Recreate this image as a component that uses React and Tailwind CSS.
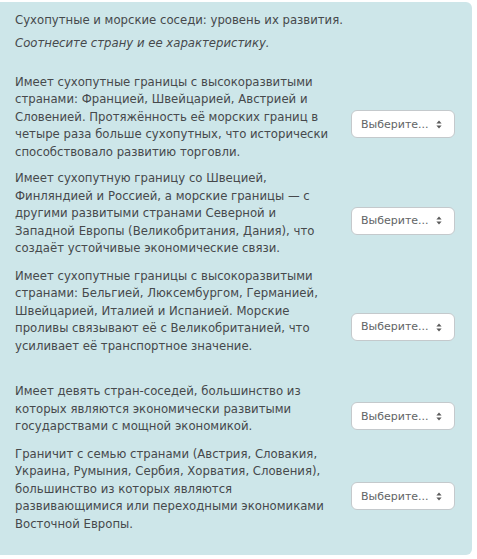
const rows = [
  {
    gap: '',
    lines: [
      'Имеет сухопутные границы с высокоразвитыми',
      'странами: Францией, Швейцарией, Австрией и',
      'Словенией. Протяжённость её морских границ в',
      'четыре раза больше сухопутных, что исторически',
      'способствовало развитию торговли.',
    ],
  },
  {
    gap: 'mt-[0.5px]',
    lines: [
      'Имеет сухопутную границу со Швецией,',
      'Финляндией и Россией, а морские границы — с',
      'другими развитыми странами Северной и',
      'Западной Европы (Великобритания, Дания), что',
      'создаёт устойчивые экономические связи.',
    ],
  },
  {
    gap: 'mt-[1.5px]',
    lines: [
      'Имеет сухопутные границы с высокоразвитыми',
      'странами: Бельгией, Люксембургом, Германией,',
      'Швейцарией, Италией и Испанией. Морские',
      'проливы связывают её с Великобританией, что',
      'усиливает её транспортное значение.',
      '\u00a0',
    ],
  },
  {
    gap: 'mt-[2px]',
    lines: [
      'Имеет девять стран-соседей, большинство из',
      'которых являются экономически развитыми',
      'государствами с мощной экономикой.',
    ],
  },
  {
    gap: 'mt-[1.5px]',
    lines: [
      'Граничит с семью странами (Австрия, Словакия,',
      'Украина, Румыния, Сербия, Хорватия, Словения),',
      'большинство из которых являются',
      'развивающимися или переходными экономиками',
      'Восточной Европы.',
    ],
  },
]

function Caret() {
  return (
    <svg width="6" height="9" viewBox="0 0 6 9" className="shrink-0">
      <path d="M3 0.5 L5.6 3.6 H0.4 Z" fill="#5a5a5a" />
      <path d="M3 8.5 L5.6 5.4 H0.4 Z" fill="#5a5a5a" />
    </svg>
  )
}

function Select() {
  return (
    <div className="mt-[7px] flex h-[28px] w-[104px] shrink-0 items-center justify-between rounded-[6px] border border-[#c4c9cc] bg-white pl-[9px] pr-[12px] text-[11px] text-[#626466]">
      <span>Выберите...</span>
      <Caret />
    </div>
  )
}

export default function App() {
  return (
    <div className="min-h-screen bg-white pt-[2px] font-['DejaVu_Sans',sans-serif] text-[#46494c]">
      <div className="w-[472px] rounded-r-[6px] bg-[#cde6e9] pb-[15px] pl-[15px] pr-[17px] pt-[10px] text-[11.7px] leading-[17.5px]">
        <p className="mb-[5.5px]">Сухопутные и морские соседи: уровень их развития.</p>
        <p className="mb-[21px] italic">Соотнесите страну и ее характеристику.</p>
        <div className="flex flex-col gap-[1.5px]">
          {rows.map((row, i) => (
            <div key={i} className={`flex items-center justify-between ${row.gap}`}>
              <p className="mb-[7px] w-[330px]">
                {row.lines.map((l, j) => (
                  <span key={j} className="block whitespace-nowrap">{l}</span>
                ))}
              </p>
              <Select />
            </div>
          ))}
        </div>
      </div>
    </div>
  )
}
